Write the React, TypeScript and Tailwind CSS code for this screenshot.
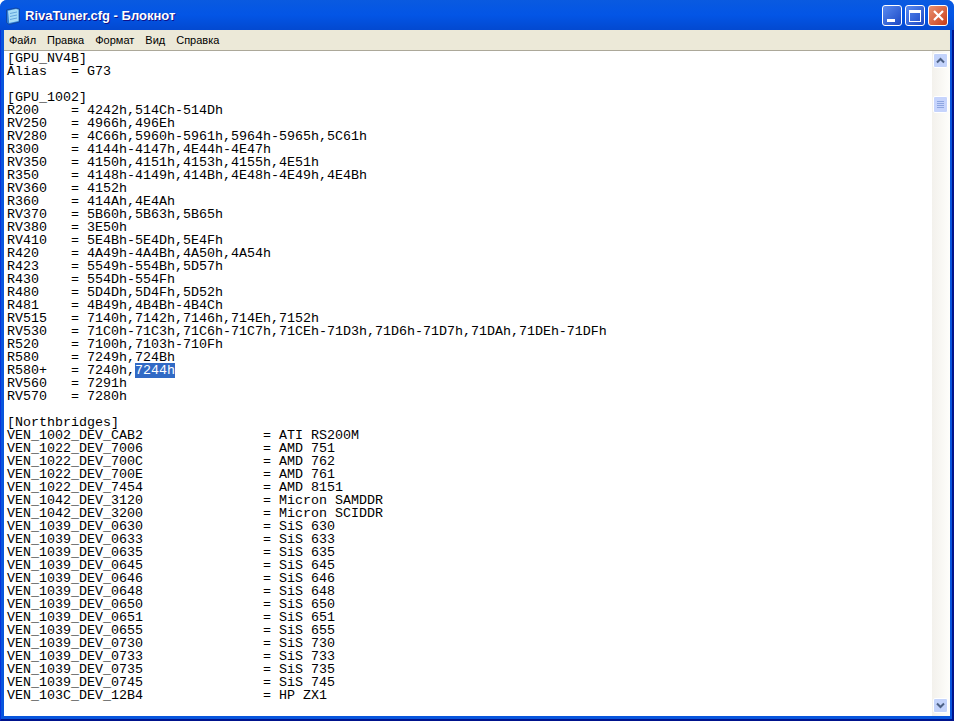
const menuItems = ['Файл', 'Правка', 'Формат', 'Вид', 'Справка'];

const lines = [
  '[GPU_NV4B]',
  'Alias   = G73',
  '',
  '[GPU_1002]',
  'R200    = 4242h,514Ch-514Dh',
  'RV250   = 4966h,496Eh',
  'RV280   = 4C66h,5960h-5961h,5964h-5965h,5C61h',
  'R300    = 4144h-4147h,4E44h-4E47h',
  'RV350   = 4150h,4151h,4153h,4155h,4E51h',
  'R350    = 4148h-4149h,414Bh,4E48h-4E49h,4E4Bh',
  'RV360   = 4152h',
  'R360    = 414Ah,4E4Ah',
  'RV370   = 5B60h,5B63h,5B65h',
  'RV380   = 3E50h',
  'RV410   = 5E4Bh-5E4Dh,5E4Fh',
  'R420    = 4A49h-4A4Bh,4A50h,4A54h',
  'R423    = 5549h-554Bh,5D57h',
  'R430    = 554Dh-554Fh',
  'R480    = 5D4Dh,5D4Fh,5D52h',
  'R481    = 4B49h,4B4Bh-4B4Ch',
  'RV515   = 7140h,7142h,7146h,714Eh,7152h',
  'RV530   = 71C0h-71C3h,71C6h-71C7h,71CEh-71D3h,71D6h-71D7h,71DAh,71DEh-71DFh',
  'R520    = 7100h,7103h-710Fh',
  'R580    = 7249h,724Bh',
  'SELECTED',
  'RV560   = 7291h',
  'RV570   = 7280h',
  '',
  '[Northbridges]',
  'VEN_1002_DEV_CAB2               = ATI RS200M',
  'VEN_1022_DEV_7006               = AMD 751',
  'VEN_1022_DEV_700C               = AMD 762',
  'VEN_1022_DEV_700E               = AMD 761',
  'VEN_1022_DEV_7454               = AMD 8151',
  'VEN_1042_DEV_3120               = Micron SAMDDR',
  'VEN_1042_DEV_3200               = Micron SCIDDR',
  'VEN_1039_DEV_0630               = SiS 630',
  'VEN_1039_DEV_0633               = SiS 633',
  'VEN_1039_DEV_0635               = SiS 635',
  'VEN_1039_DEV_0645               = SiS 645',
  'VEN_1039_DEV_0646               = SiS 646',
  'VEN_1039_DEV_0648               = SiS 648',
  'VEN_1039_DEV_0650               = SiS 650',
  'VEN_1039_DEV_0651               = SiS 651',
  'VEN_1039_DEV_0655               = SiS 655',
  'VEN_1039_DEV_0730               = SiS 730',
  'VEN_1039_DEV_0733               = SiS 733',
  'VEN_1039_DEV_0735               = SiS 735',
  'VEN_1039_DEV_0745               = SiS 745',
  'VEN_103C_DEV_12B4               = HP ZX1',
];

function NotepadIcon() {
  return (
    <svg width="18" height="18" viewBox="0 0 18 18" className="shrink-0">
      <path d="M2.5 3 L12 1 L15.5 2 L15.5 15 L5 17.5 L2.5 15.5 Z" fill="#2f7fd8" stroke="#123f96" strokeWidth="0.8" />
      <path d="M4 3.8 L12 2 L14.5 2.8 L14.5 14 L5.2 16 Z" fill="#a6dcf7" />
      <path d="M6 6.5 L13 5 M6 9.5 L13 8 M6 12.5 L13 11" stroke="#5b9fd8" strokeWidth="0.9" />
    </svg>
  );
}

function Chevron({ up }: { up?: boolean }) {
  return (
    <svg width="9" height="7" viewBox="0 0 9 7">
      <path d={up ? 'M1 5.5 L4.5 2 L8 5.5' : 'M1 1.5 L4.5 5 L8 1.5'} fill="none" stroke="#4d6185" strokeWidth="2" />
    </svg>
  );
}

export default function App() {
  return (
    <div className="flex h-[721px] w-[954px] flex-col overflow-hidden rounded-t-[7px] bg-[#0855dd]">
      {/* Title bar */}
      <div className="flex h-[30px] shrink-0 items-center bg-gradient-to-b from-[#0a5ae0] via-[#0355e6] to-[#0349d0] pl-[4px] pr-[6px] pt-[1px]">
        <NotepadIcon />
        <span className="ml-[3px] font-['Liberation_Sans',sans-serif] text-[13px] font-bold text-white [text-shadow:1px_1px_#0f1089]">
          RivaTuner.cfg - Блокнот
        </span>
        <div className="ml-auto flex gap-[3px]">
          <button className="flex h-[21px] w-[20px] items-end rounded-[3px] border border-white bg-gradient-to-br from-[#5a8af0] to-[#1d48c4] pb-[3px] pl-[4px]">
            <span className="h-[3px] w-[8px] bg-white" />
          </button>
          <button className="flex h-[21px] w-[20px] items-center justify-center rounded-[3px] border border-white bg-gradient-to-br from-[#5a8af0] to-[#1d48c4]">
            <span className="h-[12px] w-[12px] border border-t-[3px] border-white" />
          </button>
          <button className="flex h-[21px] w-[20px] items-center justify-center rounded-[3px] border border-white bg-gradient-to-br from-[#e8906f] to-[#c93a12]">
            <svg width="13" height="13" viewBox="0 0 13 13">
              <path d="M2 2 L11 11 M11 2 L2 11" stroke="white" strokeWidth="2.2" />
            </svg>
          </button>
        </div>
      </div>

      {/* Window body */}
      <div className="flex min-h-0 flex-1 flex-col border-b-2 border-l border-r-2 border-b-[#00138c] border-l-[#0831d9] border-r-[#00138c] pb-[3px] pl-[3px] pr-[2px]">
        {/* Menu bar */}
        <div className="flex h-[21px] shrink-0 items-center gap-[11px] border-b border-[#aca899] bg-[#ece9d8] pl-[5px] font-['Liberation_Sans',sans-serif] text-[11px] text-black">
          {menuItems.map((item) => (
            <span key={item}>{item}</span>
          ))}
        </div>

        <div className="flex min-h-0 flex-1 bg-white">
          {/* Text area */}
          <pre className="min-w-0 flex-1 overflow-hidden pl-[3px] pt-[1px] font-['Liberation_Mono',monospace] text-[13.33px] leading-[13px] text-black">
            {lines.map((line, i) => (
              <div key={i} className="h-[13px]">
                {line === 'SELECTED' ? (
                  <>
                    R580+   = 7240h,<span className="bg-[#316ac5] text-white">7244h</span>
                  </>
                ) : (
                  line
                )}
              </div>
            ))}
          </pre>

          {/* Scrollbar */}
          <div className="flex w-[18px] shrink-0 flex-col items-start bg-gradient-to-r from-[#f3f1ec] to-[#fefefb] pb-[3px] pl-[1px] pt-[2px]">
            <div className="flex h-[15px] w-[15px] items-center justify-center rounded-[2px] border border-white bg-[#c3d3fb]">
              <Chevron up />
            </div>
            <div className="mt-[28px] flex h-[17px] w-[15px] flex-col items-center justify-center gap-[1px] rounded-[2px] border border-white bg-[#c6d4fc]">
              <span className="h-px w-[7px] bg-[#8ea6e0]" />
              <span className="h-px w-[7px] bg-[#8ea6e0]" />
              <span className="h-px w-[7px] bg-[#8ea6e0]" />
              <span className="h-px w-[7px] bg-[#8ea6e0]" />
            </div>
            <div className="mt-auto flex h-[15px] w-[15px] items-center justify-center rounded-[2px] border border-white bg-[#c3d3fb]">
              <Chevron />
            </div>
          </div>
        </div>
      </div>
    </div>
  );
}
